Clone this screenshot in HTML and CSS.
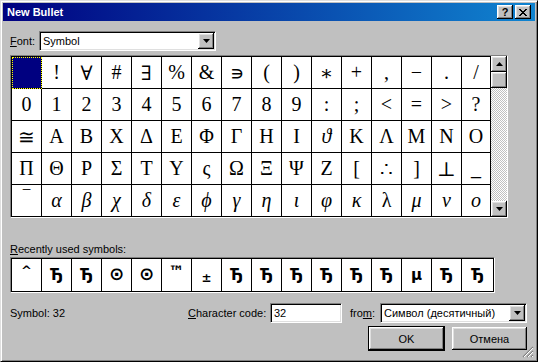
FILE: index.html
```html
<!DOCTYPE html>
<html>
<head>
  <title>New Bullet</title>
  <link rel="stylesheet" href="styles.css">
</head>
<body>
  <div class="window">
    <div class="titlebar">
      <span class="title">New Bullet</span>
      <span class="title-btn help">?</span>
      <span class="title-btn">
        <svg width="8" height="7" viewBox="0 0 8 7"><path d="M0 0h2v1h1v1h2V1h1V0h2v1H7v1H6v1H5v1h1v1h1v1h1v1H6V6H5V5H3v1H2v1H0V6h1V5h1V4h1V3H2V2H1V1H0z" fill="#000"/></svg>
      </span>
    </div>

    <div class="content">
      <div class="font-row">
        <span class="label"><u>F</u>ont:</span>
        <div class="combo font-combo">
          <span class="combo-text">Symbol</span>
          <span class="combo-btn"><svg width="7" height="4" viewBox="0 0 7 4"><path d="M0 0h7L3.5 4z" fill="#000"/></svg></span>
        </div>
      </div>

      <!-- symbol table with its scrollbar -->
      <div class="table-frame">
        <div class="symbols">
          <span class="sel"></span><span>!</span><span>∀</span><span>#</span><span>∃</span><span>%</span><span>&amp;</span><span>∍</span><span>(</span><span>)</span><span>∗</span><span>+</span><span>,</span><span>−</span><span>.</span><span>/</span>
          <span>0</span><span>1</span><span>2</span><span>3</span><span>4</span><span>5</span><span>6</span><span>7</span><span>8</span><span>9</span><span>:</span><span>;</span><span>&lt;</span><span>=</span><span>&gt;</span><span>?</span>
          <span>≅</span><span>Α</span><span>Β</span><span>Χ</span><span>Δ</span><span>Ε</span><span>Φ</span><span>Γ</span><span>Η</span><span>Ι</span><span class="it">ϑ</span><span>Κ</span><span>Λ</span><span>Μ</span><span>Ν</span><span>Ο</span>
          <span>Π</span><span>Θ</span><span>Ρ</span><span>Σ</span><span>Τ</span><span>Υ</span><span>ς</span><span>Ω</span><span>Ξ</span><span>Ψ</span><span>Ζ</span><span>[</span><span>∴</span><span>]</span><span>⊥</span><span>_</span>
          <span class="over">‾</span><span class="it">α</span><span class="it">β</span><span class="it">χ</span><span class="it">δ</span><span class="it">ε</span><span class="it">ϕ</span><span class="it">γ</span><span class="it">η</span><span class="it">ι</span><span class="it">φ</span><span class="it">κ</span><span>λ</span><span class="it">μ</span><span class="it">ν</span><span class="it">ο</span>
        </div>
        <div class="scrollbar">
          <span class="sb-btn"><svg width="7" height="4" viewBox="0 0 7 4"><path d="M0 4h7L3.5 0z" fill="#000"/></svg></span>
          <span class="sb-btn"></span>
          <span class="sb-track"></span>
          <span class="sb-btn"><svg width="7" height="4" viewBox="0 0 7 4"><path d="M0 0h7L3.5 4z" fill="#000"/></svg></span>
        </div>
      </div>

      <div class="recent-label"><u>R</u>ecently used symbols:</div>
      <div class="recent-frame">
        <div class="recent">
          <span class="caret">^</span><span>Ђ</span><span>Ђ</span><span class="small">⊙</span><span class="small">⊙</span><span class="tm">™</span><span class="pm">±</span><span>Ђ</span><span>Ђ</span><span>Ђ</span><span>Ђ</span><span>Ђ</span><span>Ђ</span><span>µ</span><span>Ђ</span><span>Ђ</span>
        </div>
      </div>

      <div class="code-row">
        <span class="symbol-info">Symbol: 32</span>
        <span class="code-label"><u>C</u>haracter code:</span>
        <div class="field code-input">32</div>
        <span class="from-label">fro<u>m</u>:</span>
        <div class="combo from-combo">
          <span class="combo-text">Символ (десятичный)</span>
          <span class="combo-btn"><svg width="7" height="4" viewBox="0 0 7 4"><path d="M0 0h7L3.5 4z" fill="#000"/></svg></span>
        </div>
      </div>

      <div class="button-row">
        <button class="btn default">OK</button>
        <button class="btn">Отмена</button>
      </div>
    </div>

    <svg class="grip" width="12" height="12" viewBox="0 0 12 12">
      <path d="M11 1L1 11M11 5L5 11M11 9L9 11" stroke="#808080" stroke-width="1.2"/>
      <path d="M11 2L2 11M11 6L6 11M11 10L10 11" stroke="#fff" stroke-width="1"/>
    </svg>
  </div>
</body>
</html>
```

FILE: styles.css
```css
* {
  box-sizing: border-box;
}

body {
  margin: 0;
  background: #c0c0c0;
  font-family: "Liberation Sans", Arial, sans-serif;
  font-size: 11px;
  color: #000;
}

/* outer dialog frame */
.window {
  position: relative;
  width: 538px;
  height: 362px;
  padding: 2px;
  background: #c0c0c0;
  border: 1px solid;
  border-color: #dfdfdf #000 #000 #dfdfdf;
  box-shadow: inset 1px 1px #fff, inset -1px -1px #808080;
}

.titlebar {
  display: flex;
  align-items: center;
  height: 18px;
  padding: 0 4px 0 4px;
  background: linear-gradient(to right, #000080, #1084d0);
  color: #fff;
  font-weight: bold;
  font-size: 11px;
}

.title {
  flex: 1;
}

.title-btn {
  display: flex;
  align-items: center;
  justify-content: center;
  width: 16px;
  height: 14px;
  background: #c0c0c0;
  color: #000;
  box-shadow: inset -1px -1px #000, inset 1px 1px #fff, inset -2px -2px #808080, inset 2px 2px #dfdfdf;
}

.title-btn.help {
  margin-right: 2px;
  font-size: 11px;
  line-height: 14px;
}

.content {
  padding: 10px 0 0 7px;
}

.font-row {
  display: flex;
  align-items: center;
  height: 20px;
}

.label {
  width: 29px;
}

/* sunken edit fields */
.combo,
.field {
  display: flex;
  align-items: center;
  height: 20px;
  background: #fff;
  border: 1px solid;
  border-color: #808080 #fff #fff #808080;
  box-shadow: inset 1px 1px #000, inset -1px -1px #dfdfdf;
  padding: 0 2px 0 3px;
}

.combo-text {
  flex: 1;
}

.combo-btn {
  display: flex;
  align-items: center;
  justify-content: center;
  width: 16px;
  height: 16px;
  background: #c0c0c0;
  box-shadow: inset -1px -1px #000, inset 1px 1px #fff, inset -2px -2px #808080, inset 2px 2px #dfdfdf;
  margin-right: -1px;
}

.font-combo {
  width: 177px;
}

.table-frame {
  display: flex;
  width: 498px;
  margin-top: 4px;
  border: 1px solid;
  border-color: #808080 #fff #fff #808080;
}

.symbols {
  display: grid;
  grid-template-columns: repeat(15, 30px) 29px;
  grid-auto-rows: 32px;
  width: 480px;
  background: #fff;
  border-left: 1px solid #000;
  border-top: 1px solid #000;
  font-family: "Liberation Serif", "DejaVu Serif", serif;
  font-size: 20px;
}

.symbols span {
  display: flex;
  align-items: center;
  justify-content: center;
  border-right: 1px solid #000;
  border-bottom: 1px solid #000;
}

.symbols .it {
  font-style: italic;
}

.symbols .over {
  align-items: flex-start;
  padding-top: 8px;
  font-weight: bold;
  line-height: 12px;
}

.symbols .sel {
  background: #000080;
  outline: 1px dotted #ffff00;
  outline-offset: -1px;
}

.scrollbar {
  display: flex;
  flex-direction: column;
  width: 16px;
}

.sb-btn {
  display: flex;
  align-items: center;
  justify-content: center;
  height: 16px;
  background: #c0c0c0;
  box-shadow: inset -1px -1px #000, inset 1px 1px #fff, inset -2px -2px #808080, inset 2px 2px #dfdfdf;
}

.sb-track {
  flex: 1;
  background: repeating-conic-gradient(#c0c0c0 0 25%, #fff 0 50%) 0 0 / 2px 2px;
}

.recent-label {
  height: 13px;
  margin-top: 25px;
  line-height: 13px;
}

.recent-frame {
  width: 485px;
  margin-top: 1px;
  border: 1px solid;
  border-color: #808080 #fff #fff #808080;
}

.recent {
  display: grid;
  grid-template-columns: repeat(15, 30px) 32px;
  grid-auto-rows: 33px;
  background: #fff;
  border-left: 1px solid #000;
  border-top: 1px solid #000;
  font-family: "DejaVu Sans", sans-serif;
  font-weight: bold;
  font-size: 15px;
}

.recent span {
  display: flex;
  align-items: center;
  justify-content: center;
  border-right: 1px solid #000;
  border-bottom: 1px solid #000;
}

.recent .caret {
  align-items: flex-start;
  padding-top: 4px;
  font-size: 13px;
}

.recent .small {
  font-size: 18px;
  padding-bottom: 4px;
}

.recent .tm {
  align-items: flex-start;
  padding-top: 3px;
  font-size: 16px;
}

.recent .pm {
  padding-top: 6px;
  font-size: 12px;
}

.code-row {
  display: flex;
  align-items: center;
  height: 20px;
  margin-top: 10px;
}

.symbol-info {
  width: 178px;
}

.code-label {
  width: 82px;
}

.code-input {
  width: 72px;
}

.from-label {
  width: 30px;
  margin-left: 8px;
}

.from-combo {
  width: 147px;
}

.button-row {
  display: flex;
  justify-content: flex-end;
  gap: 8px;
  margin-top: 4px;
  padding-right: 8px;
}

.btn {
  width: 75px;
  height: 23px;
  padding: 0;
  border: none;
  background: #c0c0c0;
  font-family: "Liberation Sans", Arial, sans-serif;
  font-size: 11px;
  color: #000;
  box-shadow: inset -1px -1px #000, inset 1px 1px #fff, inset -2px -2px #808080, inset 2px 2px #dfdfdf;
}

.btn.default {
  box-shadow: 0 0 0 1px #000, inset -1px -1px #000, inset 1px 1px #fff, inset -2px -2px #808080, inset 2px 2px #dfdfdf;
}

.grip {
  position: absolute;
  right: 3px;
  bottom: 3px;
}
```
